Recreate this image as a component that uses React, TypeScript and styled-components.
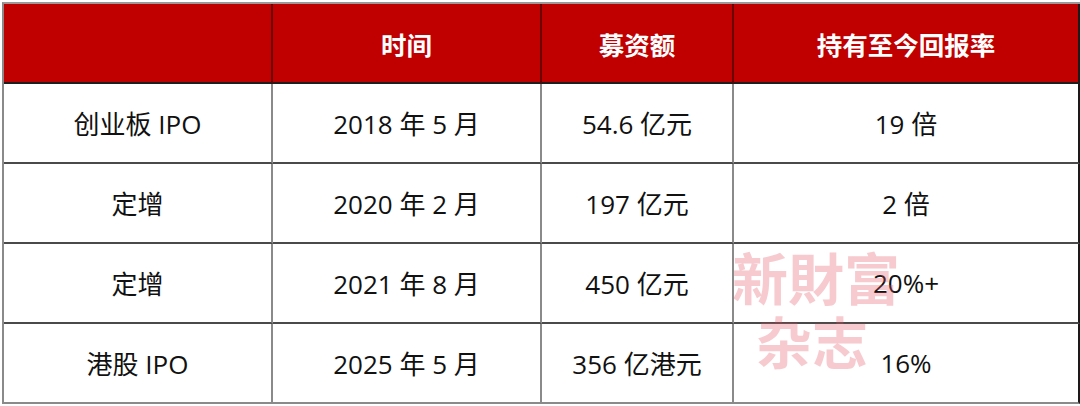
import styled, { createGlobalStyle } from 'styled-components';

const GlobalStyle = createGlobalStyle`
  html, body {
    margin: 0;
    padding: 0;
    background: #ffffff;
  }
  body {
    font-family: "Open Sans", "Noto Sans CJK SC", sans-serif;
  }
`;

type Row = { name: string; date: string; amount: string; ret: string };

const rows: Row[] = [
  { name: '创业板 IPO', date: '2018 年 5 月', amount: '54.6 亿元', ret: '19 倍' },
  { name: '定增', date: '2020 年 2 月', amount: '197 亿元', ret: '2 倍' },
  { name: '定增', date: '2021 年 8 月', amount: '450 亿元', ret: '20%+' },
  { name: '港股 IPO', date: '2025 年 5 月', amount: '356 亿港元', ret: '16%' },
];

const columns = [269, 269, 192, 346];

const Page = styled.div`
  position: relative;
  width: 1080px;
  height: 406px;
  padding: 2px 0 0 2px;
  box-sizing: border-box;
  overflow: hidden;
`;

const Table = styled.table`
  border-collapse: separate;
  border-spacing: 0;
  table-layout: fixed;
  width: 1078px;
  border-top: 2px solid #9a9a9a;
  border-left: 2px solid #8a8a8a;
`;

const HeadCell = styled.th<{ $last?: boolean }>`
  height: 78px;
  padding: 0;
  background: #c00000;
  color: #ffffff;
  font-family: "Noto Sans CJK SC", sans-serif;
  font-size: 25.5px;
  font-weight: 700;
  text-align: center;
  vertical-align: middle;
  border-right: 2px solid ${({ $last }) => ($last ? '#1a1a1a' : '#6a0000')};
  border-bottom: 2px solid #1e1e1e;
`;

const Cell = styled.td<{ $last?: boolean; $bottom?: boolean }>`
  height: 78px;
  padding: 0;
  color: #111111;
  font-size: 26px;
  text-align: center;
  vertical-align: middle;
  border-right: 2px solid ${({ $last }) => ($last ? '#1a1a1a' : '#8a8a8a')};
  border-bottom: 2px solid ${({ $bottom }) => ($bottom ? '#8a8a8a' : '#4a4a4a')};
`;

const Watermark = styled.div`
  position: absolute;
  left: 728px;
  top: 244px;
  display: flex;
  flex-direction: column;
  align-items: center;
  width: 176px;
  font-family: "Noto Sans CJK TC", "Noto Sans CJK SC", serif;
  font-weight: 700;
  font-size: 56px;
  line-height: 64px;
  color: rgba(226, 80, 92, 0.3);
  pointer-events: none;
`;

const WatermarkLine = styled.span<{ $shift?: number }>`
  display: block;
  margin-left: ${({ $shift }) => $shift ?? 0}px;
`;

export default function App() {
  return (
    <Page>
      <GlobalStyle />
      <Table>
        <colgroup>
          {columns.map((w, i) => (
            <col key={i} style={{ width: w }} />
          ))}
        </colgroup>
        <thead>
          <tr>
            <HeadCell />
            <HeadCell>时间</HeadCell>
            <HeadCell>募资额</HeadCell>
            <HeadCell $last>持有至今回报率</HeadCell>
          </tr>
        </thead>
        <tbody>
          {rows.map((r, i) => {
            const bottom = i === rows.length - 1;
            return (
              <tr key={i}>
                <Cell $bottom={bottom}>{r.name}</Cell>
                <Cell $bottom={bottom}>{r.date}</Cell>
                <Cell $bottom={bottom}>{r.amount}</Cell>
                <Cell $bottom={bottom} $last>
                  {r.ret}
                </Cell>
              </tr>
            );
          })}
        </tbody>
      </Table>
      <Watermark>
        <WatermarkLine>新財富</WatermarkLine>
        <WatermarkLine $shift={-8}>杂志</WatermarkLine>
      </Watermark>
    </Page>
  );
}
